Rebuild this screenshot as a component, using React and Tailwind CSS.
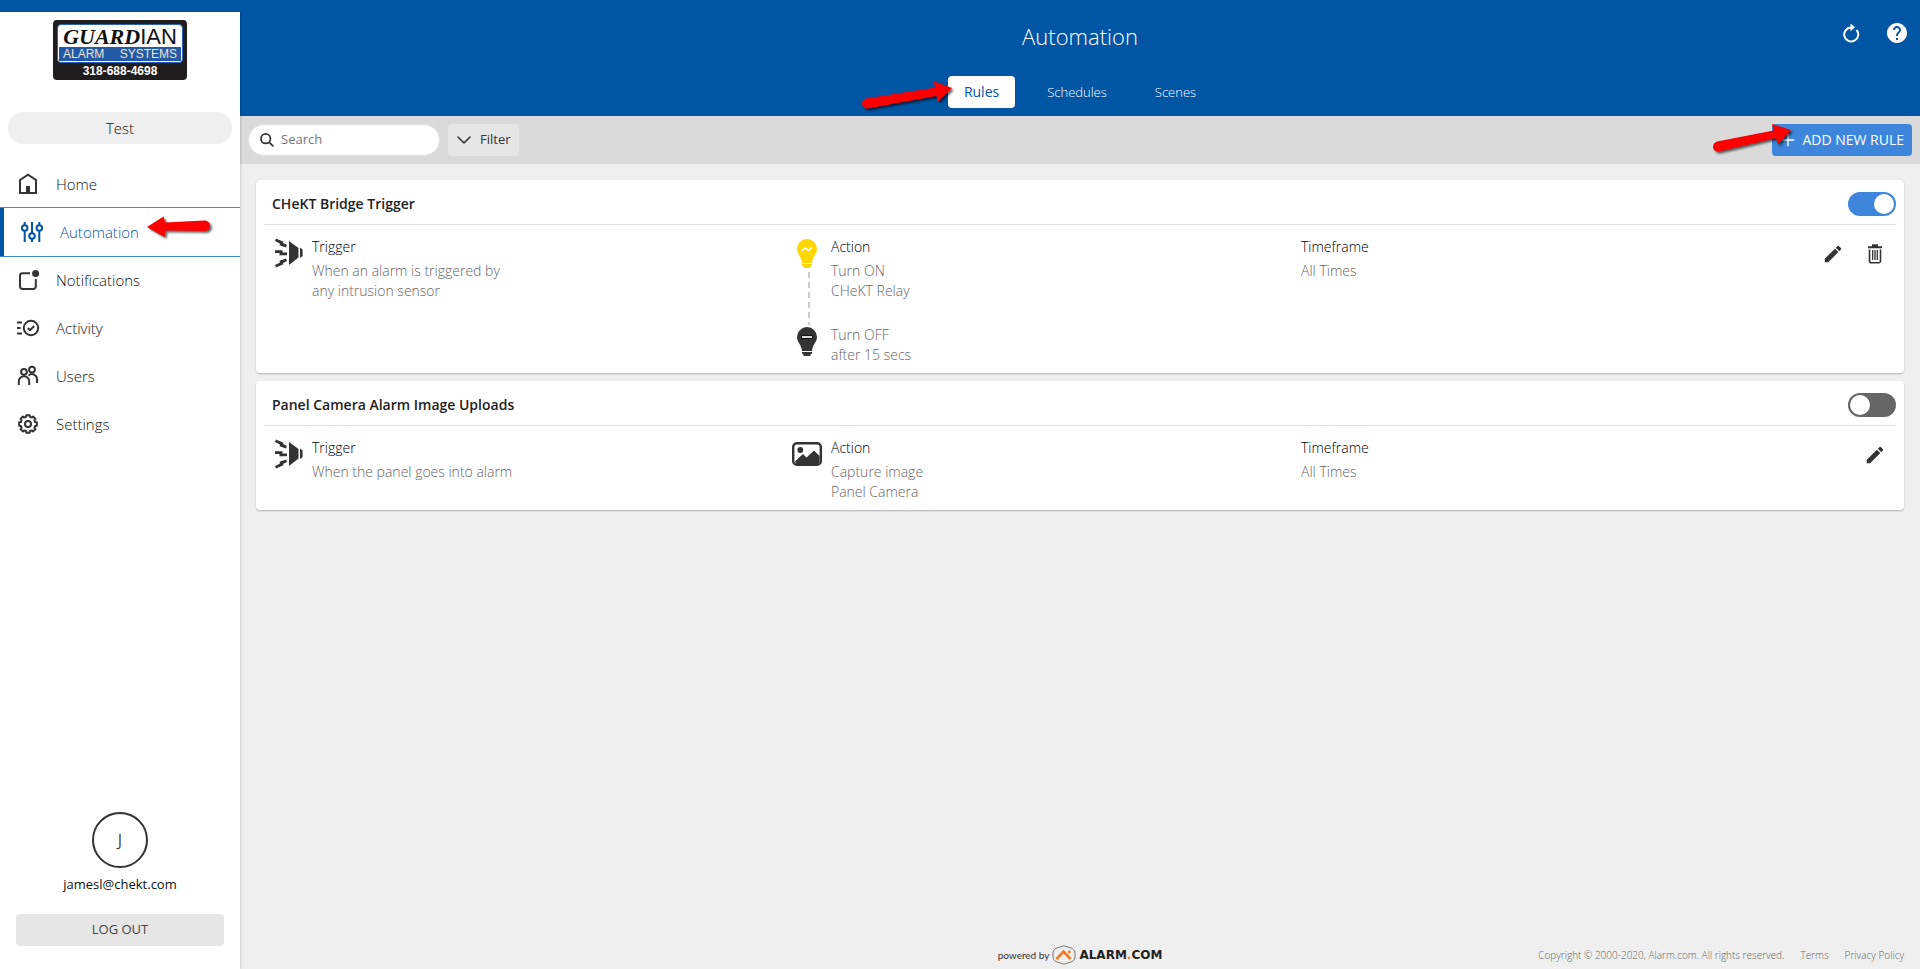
import { useState } from 'react'
import { ChevronDown, Plus } from 'lucide-react'
import { MdEdit, MdHelp } from 'react-icons/md'

// Outline of an 8 tooth gear centred in a 24x24 box
const gearPath = (() => {
    const points = []
    for (let i = 0; i < 8; i++) {
        const base = (i * Math.PI) / 4
        const steps = [[-0.26, 7.4], [-0.19, 9], [0.19, 9], [0.26, 7.4]]
        steps.forEach(([offset, radius]) => {
            const x = 12 + radius * Math.cos(base + offset)
            const y = 12 + radius * Math.sin(base + offset)
            points.push(`${x.toFixed(2)} ${y.toFixed(2)}`)
        })
    }
    return `M${points.join('L')}Z`
})()

const MenuIcon = ({ children }) => (
    <svg viewBox="0 0 24 24" className="w-6 h-6 shrink-0" fill="none" stroke="currentColor" strokeWidth="2" aria-hidden="true">
        {children}
    </svg>
)

const HomeIcon = () => (
    <MenuIcon>
        <path d="M4 8L12 2.6L20 8V21H4Z" />
        <path d="M10 14h4v6h-4z" fill="currentColor" stroke="none" />
    </MenuIcon>
)

const AutomationIcon = () => (
    <MenuIcon>
        <circle cx="4.7" cy="8" r="2.8" />
        <circle cx="12" cy="16" r="2.8" />
        <circle cx="19.3" cy="8" r="2.8" />
        <path d="M4.7 2v3M4.7 11v11M12 2v11M12 19v3M19.3 2v3M19.3 11v11" />
    </MenuIcon>
)

const NotificationsIcon = () => (
    <MenuIcon>
        <path d="M14 5.2H6.5A2.5 2.5 0 0 0 4 7.7V18.5A2.5 2.5 0 0 0 6.5 21H17.3A2.5 2.5 0 0 0 19.8 18.5V11" />
        <circle cx="19.6" cy="5.6" r="3.5" fill="currentColor" stroke="none" />
    </MenuIcon>
)

const ActivityIcon = () => (
    <MenuIcon>
        <path d="M1 6.6h5M1 12h3.6M1 17.4h5" />
        <circle cx="15" cy="12" r="7.2" />
        <path d="M11.8 12l2.2 2.2 4.2-4.2" />
    </MenuIcon>
)

const UsersIcon = () => (
    <MenuIcon>
        <circle cx="8" cy="7.8" r="2.9" />
        <circle cx="16" cy="5.6" r="2.9" />
        <path d="M2.8 21v-3.5a5.2 5.2 0 0 1 10.4 0V21M12.5 11.6a5 5 0 0 1 8.5 3.7V19" />
    </MenuIcon>
)

const SettingsIcon = () => (
    <MenuIcon>
        <path d={gearPath} strokeLinejoin="round" />
        <circle cx="12" cy="12" r="3" />
    </MenuIcon>
)

const SearchIcon = () => (
    <svg viewBox="0 0 16 16" className="w-3.5 h-3.5 shrink-0" fill="none" stroke="#333" strokeWidth="2" aria-hidden="true">
        <circle cx="6.5" cy="6.5" r="5.4" />
        <path d="M10.3 10.3l5 5" />
    </svg>
)

const RefreshIcon = () => (
    <svg viewBox="0 0 20 20" className="w-5 h-5" fill="none" stroke="white" strokeWidth="2" aria-hidden="true">
        <path d="M10 4.5A7 7 0 1 0 15.6 7" />
        <path d="M9.5 0.5L14 4.3L9.5 8.3Z" fill="white" stroke="none" />
    </svg>
)

const TrashIcon = () => (
    <svg viewBox="0 0 16 20" className="w-4 h-5" fill="none" stroke="currentColor" aria-hidden="true">
        <path d="M1 3.2h14M5 1.2h6" strokeWidth="2" />
        <path d="M2.5 5.5V17a1.8 1.8 0 0 0 1.8 1.8h7.4A1.8 1.8 0 0 0 13.5 17V5.5" strokeWidth="1.6" />
        <path d="M5.7 6v10M8 6v10M10.3 6v10" strokeWidth="1.3" />
    </svg>
)

const SirenIcon = () => (
    <svg viewBox="0 0 30 30" className="w-[30px] h-[30px] mt-px ml-0.5" fill="#333" aria-hidden="true">
        <path d="M15 3L24.5 10V19.5L15 27Z" />
        <path d="M26 9.5L28.6 11.5V18L26 20Z" />
        <path d="M2 .5L9.5 3.7L9 5L13 7L12 9.5L5.5 7.2L6 5.5L1 3Z" />
        <path d="M1 12.3H8.5V14.5H13V17.3H5.5V15H1Z" />
        <path d="M2 29.5L9.5 26.3L9 25L13 23L12 20.5L5.5 22.8L6 24.5L1 27Z" />
    </svg>
)

const bulbPath = 'M10 0A10 10 0 0 1 20 10C20 15 15.5 17.5 15 24H5C4.5 17.5 0 15 0 10A10 10 0 0 1 10 0ZM5 25H15V26.5L13.5 27.2V29H6.5V27.2L5 26.5Z'

const BulbOnIcon = () => (
    <svg viewBox="0 0 20 29" className="w-5 h-[29px]" aria-hidden="true">
        <path d={bulbPath} fill="#ffd600" />
        <path d="M5 12L8.3 8.7L11.3 11.7L15 8.5" fill="none" stroke="white" strokeWidth="1.6" />
    </svg>
)

const BulbOffIcon = () => (
    <svg viewBox="0 0 20 29" className="w-5 h-[29px]" aria-hidden="true">
        <path d={bulbPath} fill="#333" />
        <path d="M4.5 8.5h11v3h-11z" fill="#d5dcd8" stroke="#111" />
    </svg>
)

const PictureIcon = () => (
    <svg viewBox="0 0 30 24" className="w-[30px] h-6 mt-0.5" aria-hidden="true">
        <rect x="1.2" y="1.2" width="27.6" height="21.6" rx="3.8" fill="white" stroke="#333" strokeWidth="2.4" />
        <circle cx="8.3" cy="8" r="2.9" fill="#333" />
        <path d="M3 19.5L11 12L14.5 15.5L22 8.5L27.5 14V20L26 22H4Z" fill="#333" />
    </svg>
)

const arrowStyle = 'absolute z-10 overflow-visible pointer-events-none drop-shadow-[2px_2px_1px_rgba(0,0,0,0.6)]'

const ArrowLeft = () => (
    <svg viewBox="0 0 64 22" className={`${arrowStyle} w-16 h-[22px] left-[147px] top-2`} fill="#fb0000" aria-hidden="true">
        <path d="M0 11L16.5 0.5L18.5 6.5L57 4.5C65 4.5 65 15 57 15L18.5 14.5L17.5 21Z" />
    </svg>
)

const ArrowRight = ({ className }) => (
    <svg viewBox="0 0 90 28" className={`${arrowStyle} w-[90px] h-7 ${className}`} fill="#fb0000" aria-hidden="true">
        <path d="M90 7L71 0L73.5 6.5L4 17.5C-2 19 -1 28 6 27.5L74.5 15L75.5 21Z" />
    </svg>
)

const ArrowUpRight = ({ className }) => (
    <svg viewBox="0 0 78 28" className={`${arrowStyle} w-[78px] h-7 ${className}`} fill="#fb0000" aria-hidden="true">
        <path d="M78 6L59 0L60.5 6.5L4 17.5C-2 19.5 -1 28 6 27.5L63 14L64.5 20.5Z" />
    </svg>
)

const menu = [
    { label: 'Home', Icon: HomeIcon },
    { label: 'Automation', Icon: AutomationIcon },
    { label: 'Notifications', Icon: NotificationsIcon },
    { label: 'Activity', Icon: ActivityIcon },
    { label: 'Users', Icon: UsersIcon },
    { label: 'Settings', Icon: SettingsIcon }
]

const tabs = ['Rules', 'Schedules', 'Scenes']

const rules = [
    {
        name: 'CHeKT Bridge Trigger',
        enabled: true,
        trigger: ['When an alarm is triggered by', 'any intrusion sensor'],
        actions: [
            { Icon: BulbOnIcon, lines: ['Turn ON', 'CHeKT Relay'] },
            { Icon: BulbOffIcon, lines: ['Turn OFF', 'after 15 secs'] }
        ],
        timeframe: 'All Times',
        canDelete: true
    },
    {
        name: 'Panel Camera Alarm Image Uploads',
        enabled: false,
        trigger: ['When the panel goes into alarm'],
        actions: [{ Icon: PictureIcon, lines: ['Capture image', 'Panel Camera'] }],
        timeframe: 'All Times',
        canDelete: false
    }
]

const DealerLogo = () => (
    <div className="w-[134px] h-[60px] mx-auto rounded bg-[#1f1d1e] px-1 pt-1 text-center">
        <div className="h-[39px] rounded-sm border border-[#2b62b4] bg-white p-px">
            <div className="h-[21px] flex items-center justify-center whitespace-nowrap text-[#111]">
                <span className="font-['Liberation_Serif',serif] font-bold italic text-[22px] leading-[22px]">GUARD</span>
                <span className="font-['Liberation_Sans',sans-serif] text-[22px] leading-[22px]">IAN</span>
            </div>
            <div className="h-[14px] px-1 flex items-center justify-between bg-[#2459a5] font-['Liberation_Sans',sans-serif] text-xs leading-[14px] text-[#eee6d8]">
                <span>ALARM</span>
                <span>SYSTEMS</span>
            </div>
        </div>
        <div className="font-['Liberation_Sans',sans-serif] font-bold text-xs leading-4 text-white">318-688-4698</div>
    </div>
)

const Sidebar = () => (
    <aside className="w-60 shrink-0 mt-3 flex flex-col bg-white shadow-[1px_0_2px_rgba(0,0,0,0.15)] z-10">
        <div className="pt-2">
            <DealerLogo />
        </div>
        <button className="mx-2 mt-8 h-8 rounded-full bg-[#efefef] text-[15px] font-light text-[#111]">Test</button>

        <nav className="mt-4">
            {menu.map(({ label, Icon }) => {
                const active = label === 'Automation'
                return (
                    <a
                        key={label}
                        href="#"
                        className={`relative flex items-center gap-4 text-[15px] ${active
                            ? 'h-[50px] -my-px pl-5 border-y border-y-[#3d86dc] text-[#0055a5] shadow-[inset_4px_0_0_#0055a5]'
                            : 'h-12 pl-4 text-[#333]'}`}
                    >
                        <Icon />
                        <span className={active ? 'font-light' : 'font-light text-[#111]'}>{label}</span>
                        {active && <ArrowLeft />}
                    </a>
                )
            })}
        </nav>

        <div className="mt-auto px-4 pb-[23px] flex flex-col items-center">
            <div className="w-14 h-14 rounded-full border-2 border-[#333] flex items-center justify-center text-base text-[#444]">J</div>
            <p className="mt-1.5 text-[13px] leading-5 text-[#111]">jamesl@chekt.com</p>
            <button className="mt-5 w-full h-8 rounded bg-[#e6e6e6] text-[13px] text-[#444]">LOG OUT</button>
        </div>
    </aside>
)

const Header = () => (
    <header className="h-[116px] flex flex-col justify-between">
        <div className="grid grid-cols-3 items-center pt-4">
            <span />
            <h1 className="text-center text-[22px] leading-10 font-light text-white">Automation</h1>
            <div className="flex justify-end items-center gap-6 pr-[11px] -mt-1.5">
                <button aria-label="Refresh"><RefreshIcon /></button>
                <button aria-label="Help"><MdHelp className="w-6 h-6 text-white" /></button>
            </div>
        </div>
        <div className="flex justify-center gap-4 pb-2">
            {tabs.map(tab => (
                <button
                    key={tab}
                    className={`relative h-8 px-4 rounded ${tab === 'Rules' ? 'bg-white text-sm font-medium text-[#0055a5]' : 'pt-0.5 text-[13px] font-light text-white'}`}
                >
                    {tab}
                    {tab === 'Rules' && <ArrowRight className="right-[63px] top-[5px]" />}
                </button>
            ))}
        </div>
    </header>
)

const Toolbar = () => (
    <div className="h-12 px-2 flex items-center gap-2 bg-[#dadada]">
        <label className="w-48 h-8 px-[11px] flex items-center gap-[7px] rounded-full border border-[#e2e2e2] bg-white">
            <SearchIcon />
            <input type="text" placeholder="Search" aria-label="Search" className="w-full min-w-0 text-[13px] outline-none placeholder:text-[#777]" />
        </label>
        <button className="h-8 pl-1 pr-2 flex items-center gap-1 rounded bg-[#e6e6e6] text-[13px] text-[#333]">
            <ChevronDown className="w-6 h-6" strokeWidth={1.6} />
            Filter
        </button>
        <button className="relative ml-auto h-8 pl-1.5 pr-2 flex items-center gap-1 rounded bg-[#3d86dc] text-sm text-white">
            <Plus className="w-5 h-5" strokeWidth={1.6} />
            ADD NEW RULE
            <ArrowUpRight className="-left-[59px] top-0" />
        </button>
    </div>
)

const RuleCard = ({ rule }) => {
    const [enabled, setEnabled] = useState(rule.enabled)

    return (
        <section className="px-2 rounded bg-white shadow-[0_1px_2px_rgba(0,0,0,0.25)] text-sm leading-5 text-[#222]">
            <div className="h-[45px] pl-2 pt-1 flex items-center justify-between border-b border-[#e0e0e0]">
                <h2 className="font-semibold">{rule.name}</h2>
                <input
                    type="checkbox"
                    role="switch"
                    aria-label={rule.name}
                    checked={enabled}
                    onChange={e => setEnabled(e.target.checked)}
                    className="appearance-none w-12 h-6 p-0.5 rounded-full bg-[#666] checked:bg-[#3d86dc] before:block before:w-5 before:h-5 before:rounded-full before:bg-white before:content-[''] checked:before:ml-6"
                />
            </div>

            <div className="grid grid-cols-[519fr_510fr_595fr] pl-2 pt-3 pb-2 font-light text-black">
                {/* Trigger */}
                <div className="flex gap-2">
                    <div className="w-8 shrink-0"><SirenIcon /></div>
                    <div>
                        <h3>Trigger</h3>
                        <div className="mt-1 text-[#666]">
                            {rule.trigger.map(line => <p key={line}>{line}</p>)}
                        </div>
                    </div>
                </div>

                {/* Actions, joined by a dashed line */}
                <div>
                    {rule.actions.map(({ Icon, lines }, i) => {
                        const last = i === rule.actions.length - 1
                        return (
                            <div key={lines[0]} className="flex gap-2">
                                <div className="w-8 shrink-0 pt-0.5 flex flex-col items-center">
                                    <Icon />
                                    {!last && (
                                        <span className="w-0.5 flex-1 mt-1 ml-1 bg-[repeating-linear-gradient(#ccc_0_6px,transparent_6px_10px)]" />
                                    )}
                                </div>
                                <div className={last ? '' : 'pb-6'}>
                                    {i === 0 && <h3 className="mb-1">Action</h3>}
                                    <div className="text-[#666]">
                                        {lines.map(line => <p key={line}>{line}</p>)}
                                    </div>
                                </div>
                            </div>
                        )
                    })}
                </div>

                {/* Timeframe and row buttons */}
                <div className="flex justify-between items-start">
                    <div>
                        <h3>Timeframe</h3>
                        <p className="mt-1 text-[#666]">{rule.timeframe}</p>
                    </div>
                    <div className="flex pt-[3px] text-[#333]">
                        <button aria-label="Edit rule" className="w-[42px] h-7 flex items-center justify-center">
                            <MdEdit className="w-[22px] h-[22px]" />
                        </button>
                        {rule.canDelete && (
                            <button aria-label="Delete rule" className="w-[42px] h-7 flex items-center justify-center">
                                <TrashIcon />
                            </button>
                        )}
                    </div>
                </div>
            </div>
        </section>
    )
}

const Footer = () => (
    <footer className="mt-auto px-4 pb-1 grid grid-cols-[1fr_auto_1fr] items-center text-[10px] leading-5 text-[#666]">
        <span />
        <div className="flex items-center gap-[3px]">
            <span className="font-[Lato,sans-serif] text-[10px] text-[#333]">powered by</span>
            <svg viewBox="0 0 24 20" className="w-6 h-5" fill="none" aria-hidden="true">
                <path d="M12 .8L20.5 3.5Q23.2 5 23.2 10T20.5 16.5L12 19.2L3.5 16.5Q.8 15 .8 10T3.5 3.5Z" stroke="#777" />
                <path d="M4.5 14L11.5 6.5L18.5 14" stroke="#f47b20" strokeWidth="2.6" />
                <circle cx="17.3" cy="7" r="1.4" fill="#f47b20" />
            </svg>
            <span className="font-['DejaVu_Sans',sans-serif] text-xs leading-5 font-bold text-[#222]">
                ALARM<span className="text-[#f47b20]">.</span>COM
            </span>
        </div>
        <div className="flex justify-end gap-4 font-light">
            <span>Copyright © 2000-2020, Alarm.com. All rights reserved.</span>
            <a href="#">Terms</a>
            <a href="#">Privacy Policy</a>
        </div>
    </footer>
)

export default function App() {
    return (
        <div className="min-h-screen flex bg-[linear-gradient(#0055a5_0_116px,#efefef_116px)] font-['Open_Sans','Noto_Sans',sans-serif]">
            <Sidebar />
            <main className="flex-1 min-w-0 flex flex-col">
                <Header />
                <Toolbar />
                <div className="p-4 flex flex-col gap-2">
                    {rules.map(rule => <RuleCard key={rule.name} rule={rule} />)}
                </div>
                <Footer />
            </main>
        </div>
    )
}
